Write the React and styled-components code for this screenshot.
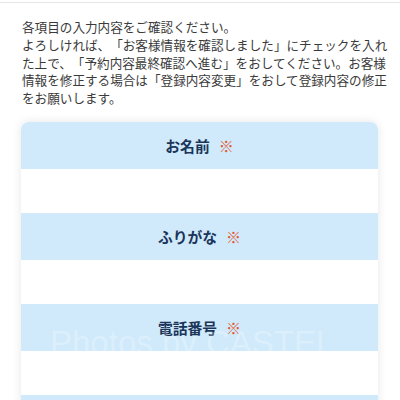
import React from "react";
import styled, { createGlobalStyle } from "styled-components";

const GlobalStyle = createGlobalStyle`
  html, body {
    margin: 0;
    padding: 0;
    background: #fff;
  }
  body {
    font-family: "Noto Sans CJK JP", "Noto Sans", sans-serif;
    color: #333;
  }
`;

const fields = [
  { id: "name", label: "お名前", value: "" },
  { id: "kana", label: "ふりがな", value: "" },
  { id: "tel", label: "電話番号", value: "" },
];

export default function App() {
  return (
    <>
      <GlobalStyle />
      <Page>
        <TopBar />
        <Intro>
          各項目の入力内容をご確認ください。
          <br />
          よろしければ、「お客様情報を確認しました」にチェックを入れた上で、「予約内容最終確認へ進む」をおしてください。お客様情報を修正する場合は「登録内容変更」をおして登録内容の修正をお願いします。
        </Intro>
        <Card>
          {fields.map((f) => (
            <Field key={f.id}>
              <Label>
                {f.label}
                <Required>※</Required>
              </Label>
              <Value>{f.value}</Value>
            </Field>
          ))}
          <Label />
        </Card>
        <Watermark>Photos by CASTEL</Watermark>
      </Page>
    </>
  );
}

const Page = styled.div`
  position: relative;
  width: 400px;
  height: 400px;
  overflow: hidden;
  background: #fff;
`;

const TopBar = styled.div`
  height: 2px;
  border-bottom: 1px solid #e6e6e6;
`;

const Intro = styled.p`
  margin: 15px 0 0 22px;
  width: 372px;
  font-size: 12.6px;
  line-height: 17.8px;
  color: #3a3a3a;
  text-spacing-trim: space-all;
`;

const Card = styled.div`
  margin: 15px 22px 0 21px;
  border-radius: 8px;
  overflow: hidden;
  background: #fff;
  box-shadow: 0 0 10px rgba(0, 0, 0, 0.1);
`;

const Field = styled.div`
  display: flex;
  flex-direction: column;
`;

const Label = styled.div`
  height: 47px;
  flex-shrink: 0;
  display: flex;
  align-items: center;
  justify-content: center;
  gap: 9px;
  background: #d0eafb;
  font-size: 14.8px;
  font-weight: 700;
  color: #1b355a;
`;

const Required = styled.span`
  font-size: 15px;
  font-weight: 400;
  color: #e4572e;
`;

const Value = styled.div`
  height: 44px;
  background: #fff;
`;

const Watermark = styled.div`
  position: absolute;
  left: 50px;
  top: 326px;
  font-family: "Liberation Sans", Arial, sans-serif;
  font-size: 33px;
  line-height: 33px;
  color: rgba(255, 255, 255, 0.25);
  pointer-events: none;
  white-space: nowrap;
`;
